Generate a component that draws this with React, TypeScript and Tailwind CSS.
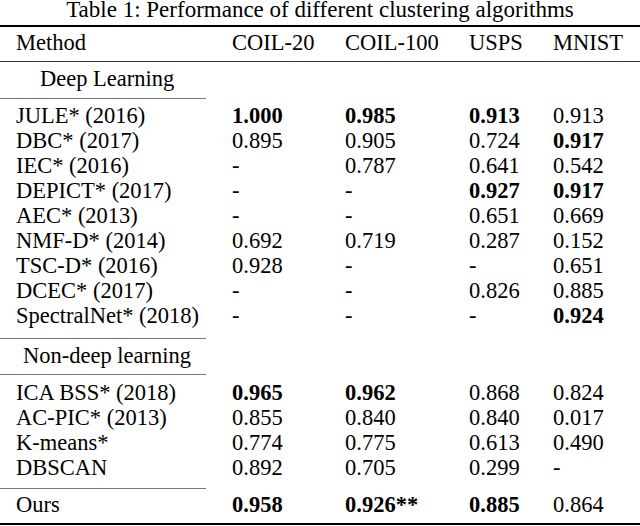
type Cell = { v: string; b?: boolean };

const deepRows: { name: string; cells: Cell[] }[] = [
  { name: "JULE* (2016)", cells: [{ v: "1.000", b: true }, { v: "0.985", b: true }, { v: "0.913", b: true }, { v: "0.913" }] },
  { name: "DBC* (2017)", cells: [{ v: "0.895" }, { v: "0.905" }, { v: "0.724" }, { v: "0.917", b: true }] },
  { name: "IEC* (2016)", cells: [{ v: "-" }, { v: "0.787" }, { v: "0.641" }, { v: "0.542" }] },
  { name: "DEPICT* (2017)", cells: [{ v: "-" }, { v: "-" }, { v: "0.927", b: true }, { v: "0.917", b: true }] },
  { name: "AEC* (2013)", cells: [{ v: "-" }, { v: "-" }, { v: "0.651" }, { v: "0.669" }] },
  { name: "NMF-D* (2014)", cells: [{ v: "0.692" }, { v: "0.719" }, { v: "0.287" }, { v: "0.152" }] },
  { name: "TSC-D* (2016)", cells: [{ v: "0.928" }, { v: "-" }, { v: "-" }, { v: "0.651" }] },
  { name: "DCEC* (2017)", cells: [{ v: "-" }, { v: "-" }, { v: "0.826" }, { v: "0.885" }] },
  { name: "SpectralNet* (2018)", cells: [{ v: "-" }, { v: "-" }, { v: "-" }, { v: "0.924", b: true }] },
];

const shallowRows: { name: string; cells: Cell[] }[] = [
  { name: "ICA BSS* (2018)", cells: [{ v: "0.965", b: true }, { v: "0.962", b: true }, { v: "0.868" }, { v: "0.824" }] },
  { name: "AC-PIC* (2013)", cells: [{ v: "0.855" }, { v: "0.840" }, { v: "0.840" }, { v: "0.017" }] },
  { name: "K-means*", cells: [{ v: "0.774" }, { v: "0.775" }, { v: "0.613" }, { v: "0.490" }] },
  { name: "DBSCAN", cells: [{ v: "0.892" }, { v: "0.705" }, { v: "0.299" }, { v: "-" }] },
];

const ours = {
  name: "Ours",
  cells: [{ v: "0.958", b: true }, { v: "0.926**", b: true }, { v: "0.885", b: true }, { v: "0.864" }],
};

function Row({ name, cells }: { name: string; cells: Cell[] }) {
  return (
    <div className="grid grid-cols-[232px_113px_124px_84px_1fr] h-[25px] leading-[25px] whitespace-nowrap">
      <div className="pl-[16px]">{name}</div>
      {cells.map((c, i) => (
        <div key={i} className={c.b ? "font-bold" : ""}>
          {c.v}
        </div>
      ))}
    </div>
  );
}

export default function App() {
  return (
    <div className="w-[640px] h-[526px] bg-white text-black font-['Liberation_Serif',serif] text-[22.5px] overflow-hidden">
      <div className="h-[19px] leading-[19px] text-[23px] text-center whitespace-nowrap">
        Table 1: Performance of different clustering algorithms
      </div>
      <div className="mt-[6px] h-[2px] bg-black" />

      <div className="mt-[3px]">
        <Row name="Method" cells={[{ v: "COIL-20" }, { v: "COIL-100" }, { v: "USPS" }, { v: "MNIST" }]} />
      </div>
      <div className="mt-[6px] h-px bg-[#333]" />

      <div className="mt-[4px] h-[25px] leading-[25px] pl-[40px]">Deep Learning</div>
      <div className="mt-[7px] h-px w-[206px] bg-[#777]" />

      <div className="mt-[4px]">
        {deepRows.map((r) => (
          <Row key={r.name} name={r.name} cells={r.cells} />
        ))}
      </div>
      <div className="mt-[10px] h-px w-[206px] bg-[#777]" />

      <div className="mt-[4px] h-[25px] leading-[25px] pl-[23px]">Non-deep learning</div>
      <div className="mt-[6px] h-px w-[206px] bg-[#777]" />

      <div className="mt-[5px]">
        {shallowRows.map((r) => (
          <Row key={r.name} name={r.name} cells={r.cells} />
        ))}
      </div>
      <div className="mt-[8px] h-px w-[206px] bg-[#777]" />

      <div className="mt-[3px]">
        <Row name={ours.name} cells={ours.cells} />
      </div>
      <div className="mt-[6px] h-[2px] bg-black" />
    </div>
  );
}
